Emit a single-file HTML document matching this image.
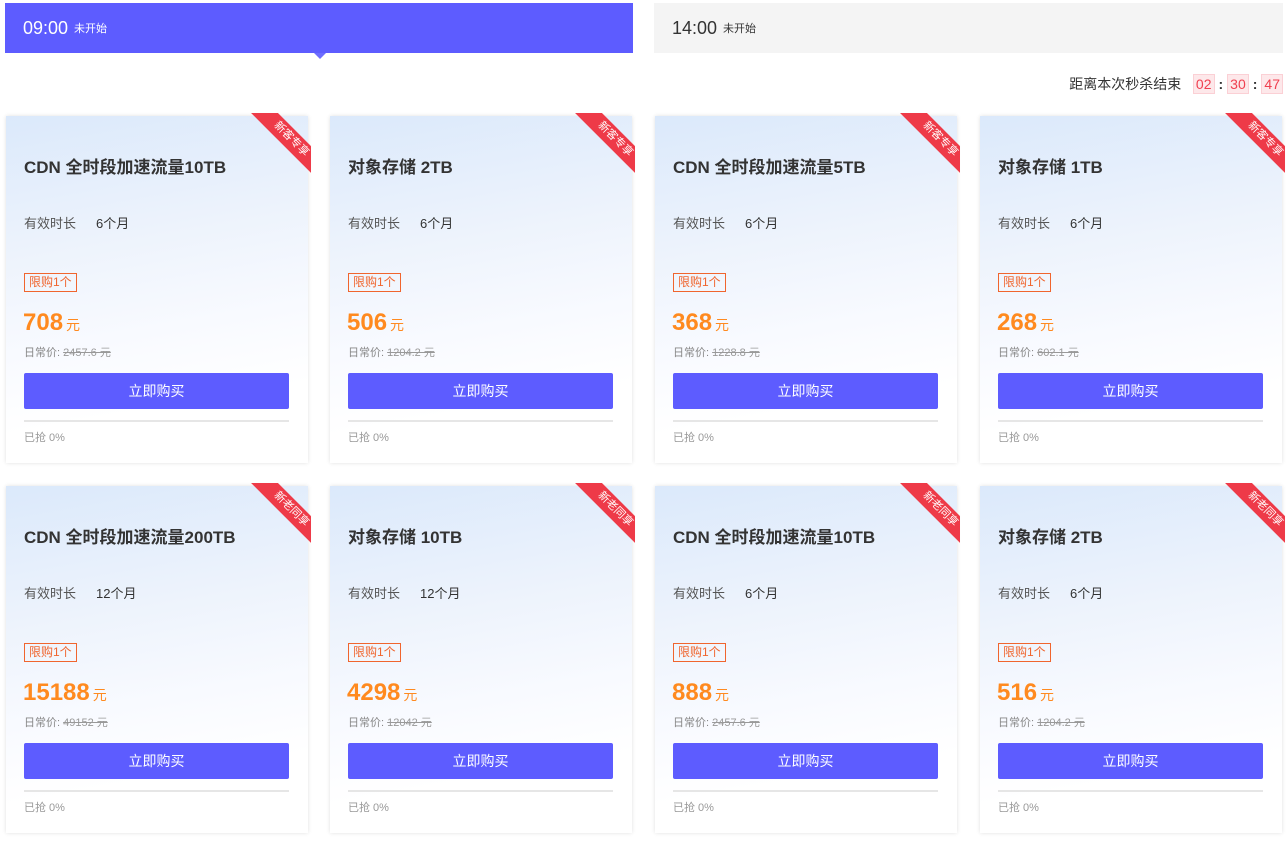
<!DOCTYPE html>
<html><head><meta charset="utf-8"><style>
*{margin:0;padding:0;box-sizing:border-box}
body{width:1288px;height:847px;background:#fff;font-family:"Liberation Sans","Noto Sans CJK SC",sans-serif;position:relative;overflow:hidden;color:#333}
.tab{position:absolute;top:3px;height:50px;display:flex;align-items:center;padding-left:18px}
.tab .t{font-size:18px}
.tab .s{font-size:11px;margin-left:6px}
.t1{left:5px;width:628px;background:#5d5cff;color:#fff}
.t2{left:654px;width:629px;background:#f4f4f4;color:#333}
.tri{position:absolute;left:314px;top:53px;border-left:6px solid transparent;border-right:6px solid transparent;border-top:6px solid #6d6cff}
.cd{position:absolute;top:74px;right:5px;font-size:14px;display:flex;align-items:center;color:#333}
.cd b{font-weight:normal;color:#f04050;background:#fde8ea;border:1px solid #fbd0d5;padding:0 2px;height:20px;line-height:19px;font-size:14px}
.cd i{font-style:normal;margin:0 4px;font-weight:bold}
.card{position:absolute;width:302px;height:347px;box-shadow:0 0 4px rgba(0,0,0,.12);background:linear-gradient(170deg,#dbe9fb 0%,#edf3fc 35%,#f8faff 60%,#fff 80%);overflow:visible}
.clip{position:absolute;right:-3px;top:-3px;width:62px;height:62px;overflow:hidden}
.rib{position:absolute;width:100px;height:19px;background:#ee3a48;color:#fff;font-size:11px;text-align:center;line-height:19px;transform:rotate(45deg);left:-8px;top:17px}
.h{position:absolute;left:18px;top:37px;font-size:17px;font-weight:bold;color:#333}
.v{position:absolute;left:18px;top:97px;font-size:13px;color:#555}
.v span{color:#333;margin-left:20px}
.lim{position:absolute;left:18px;top:157px;border:1px solid #f0652e;color:#f0652e;font-size:12px;height:19px;line-height:17px;padding:0 4px}
.p{position:absolute;left:17px;top:193px;color:#ff8a1f;font-size:24px;font-weight:bold}
.p small{font-size:14px;font-weight:normal;margin-left:3px}
.o{position:absolute;left:18px;top:228px;font-size:11px;color:#888}
.o s{color:#999}
.btn{position:absolute;left:18px;top:257px;width:265px;height:36px;background:#5d5cff;color:#fff;font-size:14px;text-align:center;line-height:36px;border-radius:2px}
.bar{position:absolute;left:18px;top:304px;width:265px;height:2px;background:#e6e6e6}
.g{position:absolute;left:18px;top:313px;font-size:11px;color:#999}
</style></head><body>
<div class="tab t1"><span class="t">09:00</span><span class="s">未开始</span></div>
<div class="tri"></div>
<div class="tab t2"><span class="t">14:00</span><span class="s">未开始</span></div>
<div class="cd">距离本次秒杀结束&nbsp;&nbsp;&nbsp;<b>02</b><i>:</i><b>30</b><i>:</i><b>47</b></div>

<div class="card" style="left:6px;top:116px"><div class="clip"><div class="rib">新客专享</div></div><div class="h">CDN 全时段加速流量10TB</div><div class="v">有效时长<span>6个月</span></div><div class="lim">限购1个</div><div class="p">708<small>元</small></div><div class="o">日常价: <s>2457.6 元</s></div><div class="btn">立即购买</div><div class="bar"></div><div class="g">已抢 0%</div></div>
<div class="card" style="left:330px;top:116px"><div class="clip"><div class="rib">新客专享</div></div><div class="h">对象存储 2TB</div><div class="v">有效时长<span>6个月</span></div><div class="lim">限购1个</div><div class="p">506<small>元</small></div><div class="o">日常价: <s>1204.2 元</s></div><div class="btn">立即购买</div><div class="bar"></div><div class="g">已抢 0%</div></div>
<div class="card" style="left:655px;top:116px"><div class="clip"><div class="rib">新客专享</div></div><div class="h">CDN 全时段加速流量5TB</div><div class="v">有效时长<span>6个月</span></div><div class="lim">限购1个</div><div class="p">368<small>元</small></div><div class="o">日常价: <s>1228.8 元</s></div><div class="btn">立即购买</div><div class="bar"></div><div class="g">已抢 0%</div></div>
<div class="card" style="left:980px;top:116px"><div class="clip"><div class="rib">新客专享</div></div><div class="h">对象存储 1TB</div><div class="v">有效时长<span>6个月</span></div><div class="lim">限购1个</div><div class="p">268<small>元</small></div><div class="o">日常价: <s>602.1 元</s></div><div class="btn">立即购买</div><div class="bar"></div><div class="g">已抢 0%</div></div>

<div class="card" style="left:6px;top:486px"><div class="clip"><div class="rib">新老同享</div></div><div class="h">CDN 全时段加速流量200TB</div><div class="v">有效时长<span>12个月</span></div><div class="lim">限购1个</div><div class="p">15188<small>元</small></div><div class="o">日常价: <s>49152 元</s></div><div class="btn">立即购买</div><div class="bar"></div><div class="g">已抢 0%</div></div>
<div class="card" style="left:330px;top:486px"><div class="clip"><div class="rib">新老同享</div></div><div class="h">对象存储 10TB</div><div class="v">有效时长<span>12个月</span></div><div class="lim">限购1个</div><div class="p">4298<small>元</small></div><div class="o">日常价: <s>12042 元</s></div><div class="btn">立即购买</div><div class="bar"></div><div class="g">已抢 0%</div></div>
<div class="card" style="left:655px;top:486px"><div class="clip"><div class="rib">新老同享</div></div><div class="h">CDN 全时段加速流量10TB</div><div class="v">有效时长<span>6个月</span></div><div class="lim">限购1个</div><div class="p">888<small>元</small></div><div class="o">日常价: <s>2457.6 元</s></div><div class="btn">立即购买</div><div class="bar"></div><div class="g">已抢 0%</div></div>
<div class="card" style="left:980px;top:486px"><div class="clip"><div class="rib">新老同享</div></div><div class="h">对象存储 2TB</div><div class="v">有效时长<span>6个月</span></div><div class="lim">限购1个</div><div class="p">516<small>元</small></div><div class="o">日常价: <s>1204.2 元</s></div><div class="btn">立即购买</div><div class="bar"></div><div class="g">已抢 0%</div></div>
</body></html>
